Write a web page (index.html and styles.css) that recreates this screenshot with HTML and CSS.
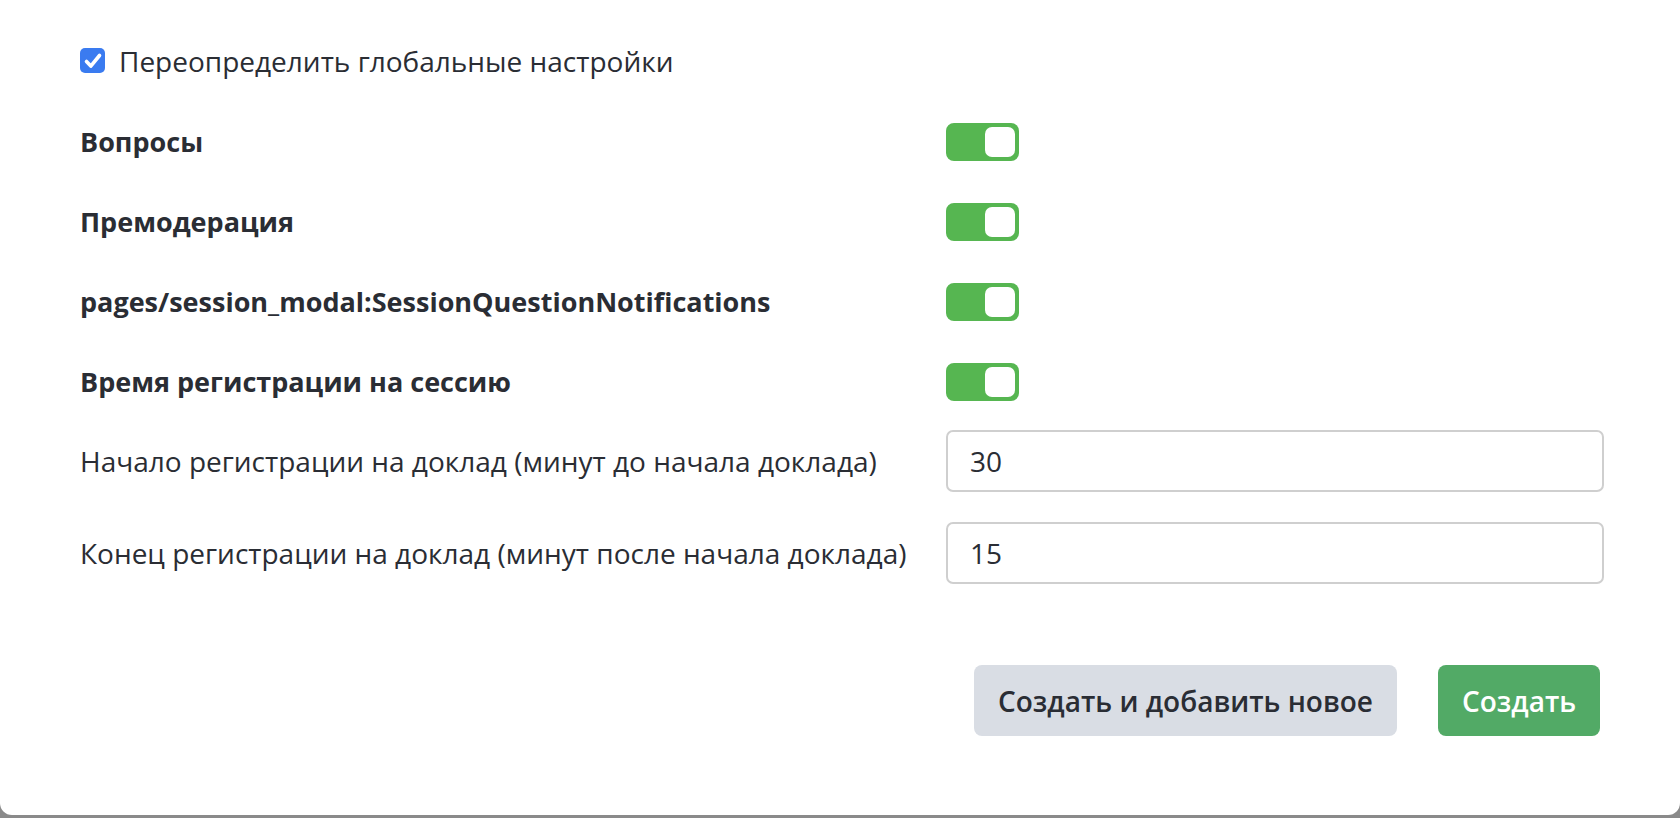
FILE: index.html
```html
<!DOCTYPE html>
<html lang="ru">
<head>
<meta charset="utf-8">
<link rel="stylesheet" href="styles.css">
</head>
<body>
<div class="modal">
  <label class="check-row">
    <span class="checkbox">
      <svg viewBox="0 0 24 24" width="24" height="24"><path d="M5.5 12.5l4.3 4.6L18.5 6.5" fill="none" stroke="#fff" stroke-width="3.6" stroke-linecap="round" stroke-linejoin="round"/></svg>
    </span>
    <span class="check-label">Переопределить глобальные настройки</span>
  </label>

  <div class="settings">
    <div class="row toggle-row">
      <div class="label bold">Вопросы</div>
      <div class="control"><span class="toggle"><span class="knob"></span></span></div>
    </div>
    <div class="row toggle-row">
      <div class="label bold">Премодерация</div>
      <div class="control"><span class="toggle"><span class="knob"></span></span></div>
    </div>
    <div class="row toggle-row">
      <div class="label bold">pages/session_modal:SessionQuestionNotifications</div>
      <div class="control"><span class="toggle"><span class="knob"></span></span></div>
    </div>
    <div class="row toggle-row">
      <div class="label bold">Время регистрации на сессию</div>
      <div class="control"><span class="toggle"><span class="knob"></span></span></div>
    </div>
    <div class="row input-row first-input">
      <div class="label">Начало регистрации на доклад (минут до начала доклада)</div>
      <div class="control"><div class="input">30</div></div>
    </div>
    <div class="row input-row">
      <div class="label">Конец регистрации на доклад (минут после начала доклада)</div>
      <div class="control"><div class="input">15</div></div>
    </div>
  </div>

  <div class="actions">
    <button class="btn btn-secondary">Создать и добавить новое</button>
    <button class="btn btn-primary">Создать</button>
  </div>
</div>
</body>
</html>
```

FILE: styles.css
```css
html, body {
  margin: 0;
  padding: 0;
}
body {
  width: 1680px;
  height: 818px;
  background: #8a8a8a;
  font-family: "Open Sans", "Liberation Sans", sans-serif;
  color: #2a2d34;
  overflow: hidden;
}
.modal {
  box-sizing: border-box;
  height: 815px;
  background: #fff;
  border-radius: 0 0 12px 12px;
  padding: 48px 76px 0 80px;
}
.check-row {
  display: flex;
  align-items: center;
  height: 25px;
  gap: 14px;
}
.checkbox {
  width: 25px;
  height: 25px;
  border-radius: 5px;
  background: #3a7bf0;
  display: flex;
  align-items: center;
  justify-content: center;
  flex: none;
}
.check-label {
  font-size: 28px;
  line-height: 25px;
  padding-top: 2px;
}
.settings {
  display: flex;
  flex-direction: column;
  margin-top: 50px;
}
.row {
  display: grid;
  grid-template-columns: 866px 1fr;
  align-items: center;
}
.toggle-row {
  height: 38px;
  margin-bottom: 42px;
}
.toggle-row:nth-child(4) {
  margin-bottom: 29px;
}
.input-row {
  height: 62px;
  margin-bottom: 30px;
}
.label {
  font-size: 28px;
  line-height: 34px;
  white-space: nowrap;
}
.bold {
  font-size: 27px;
  font-weight: 700;
}
.toggle {
  box-sizing: border-box;
  display: flex;
  justify-content: flex-end;
  align-items: center;
  width: 73px;
  height: 38px;
  border-radius: 8px;
  background: #56b651;
  padding: 4px;
}
.knob {
  width: 30px;
  height: 30px;
  border-radius: 7px;
  background: #fff;
}
.input {
  box-sizing: border-box;
  height: 62px;
  border: 2px solid #cfcfcf;
  border-radius: 7px;
  padding: 0 22px;
  display: flex;
  align-items: center;
  font-size: 28px;
  color: #2a2d34;
}
.actions {
  display: flex;
  justify-content: flex-end;
  gap: 41px;
  margin-top: 51px;
  padding-right: 4px;
}
.btn {
  font-family: "Open Sans", "Liberation Sans", sans-serif;
  font-size: 28px;
  font-weight: 600;
  height: 71px;
  border: none;
  border-radius: 8px;
  padding: 0 20px;
  cursor: pointer;
}
.btn-secondary {
  background: #d9dde4;
  color: #2a2d34;
  width: 423px;
}
.btn-primary {
  background: #52aa66;
  color: #fff;
  width: 162px;
}
```
